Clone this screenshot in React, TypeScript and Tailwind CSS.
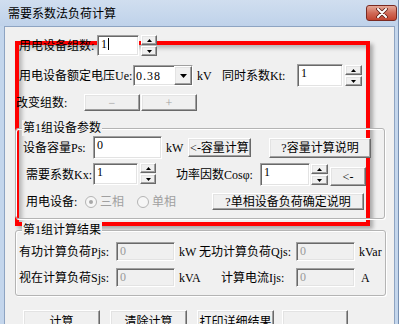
const sunken =
  'border border-t-[#a0a0a0] border-l-[#a0a0a0] border-b-white border-r-white shadow-[inset_1px_1px_0_#696969,inset_-1px_-1px_0_#e3e3e3]';
const raised =
  'border border-t-white border-l-white border-b-[#696969] border-r-[#696969] shadow-[inset_-1px_-1px_0_#a0a0a0,inset_1px_1px_0_#e3e3e3] bg-[#f0f0f0]';

function Edit({ className, value, disabled, caret }: { className: string; value: string; disabled?: boolean; caret?: boolean }) {
  return (
    <div
      className={`${className} ${sunken} ${
        disabled ? 'bg-[#f0f0f0] text-[#9a9a9a]' : 'bg-white text-black'
      } shrink-0 flex items-start px-[3px] pt-[1px] leading-[15px]`}
    >
      {value}
      {caret && <span className="ml-[1px] mt-[1px] w-[1px] h-[12px] bg-black" />}
    </div>
  );
}

function Spin({ className }: { className: string }) {
  return (
    <div className={`${className} shrink-0 flex flex-col justify-between`}>
      <div className={`${raised} h-[10px] flex items-center justify-center`}>
        <svg width="5" height="3" viewBox="0 0 5 3">
          <path d="M2.5 0L5 3H0Z" fill="#000" />
        </svg>
      </div>
      <div className={`${raised} h-[10px] flex items-center justify-center`}>
        <svg width="5" height="3" viewBox="0 0 5 3">
          <path d="M0 0H5L2.5 3Z" fill="#000" />
        </svg>
      </div>
    </div>
  );
}

function Btn({ className, children }: { className: string; children?: React.ReactNode }) {
  return (
    <div className={`${className} ${raised} shrink-0 flex items-center justify-center leading-none whitespace-nowrap`}>
      {children}
    </div>
  );
}

function Radio({ checked, label, className }: { checked?: boolean; label: string; className: string }) {
  return (
    <div className={`${className} flex items-center text-[#a0a0a0]`}>
      <div className="w-[12px] h-[12px] rounded-full border border-[#b4b4b4] bg-[#f6f6f6] flex items-center justify-center">
        {checked && <div className="w-[4px] h-[4px] rounded-full bg-[#a8a8a8]" />}
      </div>
      <span className="ml-[3px]">{label}</span>
    </div>
  );
}

function Group({ title, className, children }: { title: string; className: string; children: React.ReactNode }) {
  return (
    <div
      className={`${className} border border-[#b4b4b4] rounded-[3px] shadow-[1px_1px_0_#fff,inset_1px_1px_0_#fff] flex flex-col`}
    >
      <div className="-mt-[9px] ml-[6px] w-fit px-[1px] h-[16px] leading-[16px] bg-[#f0f0f0]">{title}</div>
      {children}
    </div>
  );
}

export default function App() {
  return (
    <div className="w-[402px] h-[324px] overflow-hidden bg-white text-[12px] text-black font-['Liberation_Serif','Noto_Sans_CJK_SC',serif]">
      <div className="w-[399px] h-[360px] bg-[#c4d6ec] border-r border-[#7790b2] flex flex-col">
        {/* Title bar */}
        <div className="h-[26px] shrink-0 flex items-start bg-gradient-to-b from-[#d0deef] to-[#bfd2ea] pl-[8px] pr-[1px]">
          <span className="flex-1 mt-[5px] leading-[16px] text-[12px] text-black font-['Noto_Sans_CJK_SC',sans-serif]">
            需要系数法负荷计算
          </span>
          <div className="mt-[5px] w-[31px] h-[16px] rounded-[3px] border border-[#7a2a22] bg-gradient-to-b from-[#e4a898] via-[#d06a58] to-[#c2432f] flex items-center justify-center">
            <svg width="12" height="10" viewBox="0 0 12 10">
              <path d="M2 1L10 9M10 1L2 9" stroke="#5b1d16" strokeWidth="3.6" strokeLinecap="round" />
              <path d="M2 1L10 9M10 1L2 9" stroke="#fff" strokeWidth="2" strokeLinecap="round" />
            </svg>
          </div>
        </div>

        {/* Client area */}
        <div className="flex-1 ml-[4px] mr-[3px] border border-[#8ea4c2] bg-[#f0f0f0] relative isolate flex flex-col">
          {/* red highlight frame */}
          <div className="absolute left-[10px] top-[14px] w-[355px] h-[185px] -z-10 border-4 border-[#ff0000] shadow-[3px_3px_4px_rgba(0,0,0,0.3),inset_3px_3px_4px_rgba(0,0,0,0.25)]" />

          {/* row: 用电设备组数 */}
          <div className="flex items-center h-[22px] mt-[8px]">
            <span className="ml-[14px] w-[78px] shrink-0 whitespace-nowrap">用电设备组数:</span>
            <Edit className="w-[42px] h-[21px] self-start" value="1" caret />
            <Spin className="ml-[2px] w-[16px] h-[21px] self-start" />
          </div>

          {/* row: 额定电压 / 同时系数 */}
          <div className="flex items-center h-[23px] mt-[7px]">
            <span className="ml-[14px] w-[114px] shrink-0 whitespace-nowrap">用电设备额定电压Ue:</span>
            <div className={`w-[60px] h-[21px] shrink-0 ${sunken} bg-white flex items-stretch`}>
              <span className="flex-1 pl-[2px] flex items-center tracking-[1px]">0.38</span>
              <div className={`w-[18px] ${raised} flex items-center justify-center`}>
                <svg width="7" height="4" viewBox="0 0 7 4">
                  <path d="M0 0H7L3.5 4Z" fill="#000" />
                </svg>
              </div>
            </div>
            <span className="ml-[4px] w-[25px] shrink-0">kV</span>
            <span className="w-[75px] shrink-0 whitespace-nowrap">同时系数Kt:</span>
            <Edit className="w-[46px] h-[23px]" value="1" />
            <Spin className="ml-[2px] w-[17px] h-[21px]" />
          </div>

          {/* row: 改变组数 */}
          <div className="flex items-center h-[17px] mt-[7px]">
            <span className="ml-[11px] w-[68px] shrink-0 whitespace-nowrap">改变组数:</span>
            <Btn className="w-[56px] h-[17px] text-[#a0a0a0]">−</Btn>
            <Btn className="ml-[1px] w-[56px] h-[17px] text-[#a0a0a0]">+</Btn>
          </div>

          {/* group 1 */}
          <Group title="第1组设备参数" className="ml-[10px] mt-[17px] w-[370px] h-[91px]">
            <div className="flex items-center h-[23px]">
              <span className="ml-[7px] w-[70px] shrink-0 whitespace-nowrap">设备容量Ps:</span>
              <Edit className="w-[69px] h-[23px]" value="0" />
              <span className="ml-[4px] w-[22px] shrink-0">kW</span>
              <Btn className="w-[63px] h-[19px]">&lt;-容量计算</Btn>
              <Btn className="ml-[18px] w-[102px] h-[20px]">?容量计算说明</Btn>
            </div>
            <div className="flex items-center h-[23px] mt-[4px]">
              <span className="ml-[10px] w-[67px] shrink-0 whitespace-nowrap">需要系数Kx:</span>
              <Edit className="w-[45px] h-[22px] self-start" value="1" />
              <Spin className="ml-[2px] w-[16px] h-[21px] self-start" />
              <span className="ml-[20px] w-[84px] shrink-0 whitespace-nowrap">功率因数Cosφ:</span>
              <Edit className="w-[50px] h-[23px]" value="1" />
              <Spin className="ml-[1px] w-[17px] h-[21px]" />
              <Btn className="ml-[2px] w-[36px] h-[19px] self-end">&lt;-</Btn>
            </div>
            <div className="flex items-center h-[17px] mt-[7px]">
              <span className="ml-[10px] w-[58px] shrink-0 whitespace-nowrap">用电设备:</span>
              <div className="w-[128px] shrink-0 flex items-center">
                <Radio className="ml-[1px]" checked label="三相" />
                <Radio className="ml-[13px]" label="单相" />
              </div>
              <Btn className="w-[152px] h-[17px]">?单相设备负荷确定说明</Btn>
            </div>
          </Group>

          {/* group 2 */}
          <Group title="第1组计算结果" className="ml-[10px] mt-[11px] w-[371px] h-[66px]">
            <div className="flex items-center h-[19px] mt-[4px]">
              <span className="ml-[3px] w-[97px] shrink-0 whitespace-nowrap">有功计算负荷Pjs:</span>
              <Edit className="w-[59px] h-[19px]" value="0" disabled />
              <span className="ml-[4px] w-[20px] shrink-0">kW</span>
              <span className="w-[97px] shrink-0 whitespace-nowrap">无功计算负荷Qjs:</span>
              <Edit className="w-[59px] h-[19px]" value="0" disabled />
              <span className="ml-[4px] shrink-0">kVar</span>
            </div>
            <div className="flex items-center h-[19px] mt-[7px]">
              <span className="ml-[3px] w-[97px] shrink-0 whitespace-nowrap">视在计算负荷Sjs:</span>
              <Edit className="w-[59px] h-[19px]" value="0" disabled />
              <span className="ml-[4px] w-[42px] shrink-0">kVA</span>
              <span className="w-[75px] shrink-0 whitespace-nowrap">计算电流Ijs:</span>
              <Edit className="w-[59px] h-[19px]" value="0" disabled />
              <span className="ml-[6px] shrink-0">A</span>
            </div>
          </Group>

          {/* bottom buttons */}
          <div className="flex items-start mt-[14px]">
            <Btn className="ml-[18px] w-[77px] h-[23px]">计算</Btn>
            <Btn className="ml-[10px] w-[77px] h-[23px]">清除计算</Btn>
            <Btn className="ml-[10px] w-[77px] h-[23px]">打印详细结果</Btn>
            <Btn className="ml-[8px] w-[66px] h-[23px]" />
          </div>
        </div>
      </div>
    </div>
  );
}
